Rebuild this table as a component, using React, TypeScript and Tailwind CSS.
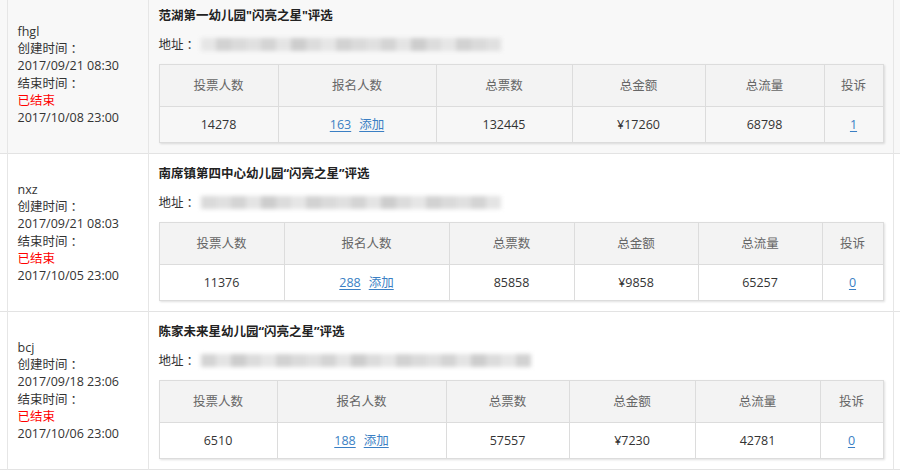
import React from "react";

type Stat = {
  voters: string;
  signups: string;
  votes: string;
  amount: string;
  traffic: string;
  complaints: string;
};

type Activity = {
  user: string;
  created: string;
  ends: string;
  title: string;
  striped: boolean;
  widths: string[];
  blur: string[];
  stat: Stat;
};

const tones = [
  "bg-[#e6e6e6]",
  "bg-[#d2d2d2]",
  "bg-[#dadada]",
  "bg-[#e0e0e0]",
  "bg-[#d4d4d4]",
  "bg-[#e4e4e4]",
  "bg-[#cdcdcd]",
  "bg-[#dcdcdc]",
];

const activities: Activity[] = [
  {
    user: "fhgl",
    created: "2017/09/21 08:30",
    ends: "2017/10/08 23:00",
    title: '范湖第一幼儿园"闪亮之星"评选',
    striped: true,
    widths: ["w-[119px]", "w-[158px]", "w-[136px]", "w-[133px]", "w-[119px]", "w-[59px]"],
    blur: tones.concat(tones, tones.slice(0, 4)),
    stat: { voters: "14278", signups: "163", votes: "132445", amount: "¥17260", traffic: "68798", complaints: "1" },
  },
  {
    user: "nxz",
    created: "2017/09/21 08:03",
    ends: "2017/10/05 23:00",
    title: "南席镇第四中心幼儿园“闪亮之星”评选",
    striped: false,
    widths: ["w-[125px]", "w-[165px]", "w-[125px]", "w-[124px]", "w-[124px]", "w-[61px]"],
    blur: tones.slice(2).concat(tones, tones.slice(0, 6)),
    stat: { voters: "11376", signups: "288", votes: "85858", amount: "¥9858", traffic: "65257", complaints: "0" },
  },
  {
    user: "bcj",
    created: "2017/09/18 23:06",
    ends: "2017/10/06 23:00",
    title: "陈家未来星幼儿园“闪亮之星”评选",
    striped: false,
    widths: ["w-[118px]", "w-[169px]", "w-[123px]", "w-[126px]", "w-[125px]", "w-[63px]"],
    blur: tones.slice(4).concat(tones, tones, tones.slice(0, 2)),
    stat: { voters: "6510", signups: "188", votes: "57557", amount: "¥7230", traffic: "42781", complaints: "0" },
  },
];

const heads = ["投票人数", "报名人数", "总票数", "总金额", "总流量", "投诉"];

function StatTable({ a }: { a: Activity }) {
  const s = a.stat;
  const cell = "border border-[#dcdcdc] text-center align-middle p-0";
  const link = "text-[#3b7fc4] underline underline-offset-2";
  return (
    <table className="table-fixed border-collapse w-[724px] shadow-[1px_1px_2px_rgba(0,0,0,0.12)]">
      <thead>
        <tr className="h-[42px] bg-[#f3f3f3]">
          {heads.map((h, i) => (
            <th key={h} className={`${cell} ${a.widths[i]} font-normal text-[#666]`}>
              {h}
            </th>
          ))}
        </tr>
      </thead>
      <tbody>
        <tr className={`h-[36px] ${a.striped ? "bg-[#f7f7f7]" : "bg-white"} text-[#333]`}>
          <td className={cell}>{s.voters}</td>
          <td className={cell}>
            <a className={link}>{s.signups}</a>
            <a className={`${link} ml-[8px]`}>添加</a>
          </td>
          <td className={cell}>{s.votes}</td>
          <td className={cell}>{s.amount}</td>
          <td className={cell}>{s.traffic}</td>
          <td className={cell}>
            <a className={link}>{s.complaints}</a>
          </td>
        </tr>
      </tbody>
    </table>
  );
}

function Row({ a }: { a: Activity }) {
  const bg = a.striped ? "bg-[#f8f8f8]" : "bg-white";
  return (
    <tr className={`${bg} border-b border-[#e3e3e3]`}>
      <td className="border-r border-[#e6e6e6] p-0" />
      <td className="border-r border-[#e6e6e6] pl-[10px] align-middle text-[#333]">
        <div>{a.user}</div>
        <div>
          创建时间<span className="ml-[3px]">：</span>
        </div>
        <div>{a.created}</div>
        <div>
          结束时间<span className="ml-[3px]">：</span>
        </div>
        <div className="text-[#ff0000]">已结束</div>
        <div>{a.ends}</div>
      </td>
      <td className="border-r border-[#e6e6e6] pl-[10px] pt-[11px] pb-[10px] align-top">
        <div className="font-bold text-[#222] h-[17px]">{a.title}</div>
        <div className="mt-[12px] h-[17px] flex items-center text-[#333]">
          <span>
            地址<span className="ml-[3px]">：</span>
          </span>
          <div className="flex h-[13px] ml-[2px] blur-[2px]">
            {a.blur.map((c, i) => (
              <div key={i} className={`w-[15px] h-full ${c}`} />
            ))}
          </div>
        </div>
        <div className="mt-[11px]">
          <StatTable a={a} />
        </div>
      </td>
      <td className="p-0" />
    </tr>
  );
}

export default function App() {
  return (
    <div
      className="w-[900px] h-[472px] overflow-hidden bg-white text-[12.5px] leading-[17.2px]"
      style={{ fontFamily: '"Open Sans", "Noto Sans CJK SC", sans-serif' }}
    >
      <table className="table-fixed border-collapse w-[900px] -mt-[4px]">
        <colgroup>
          <col className="w-[7px]" />
          <col className="w-[141px]" />
          <col className="w-[745px]" />
          <col className="w-[7px]" />
        </colgroup>
        <tbody>
          {activities.map(a => (
            <Row key={a.user} a={a} />
          ))}
        </tbody>
      </table>
    </div>
  );
}
